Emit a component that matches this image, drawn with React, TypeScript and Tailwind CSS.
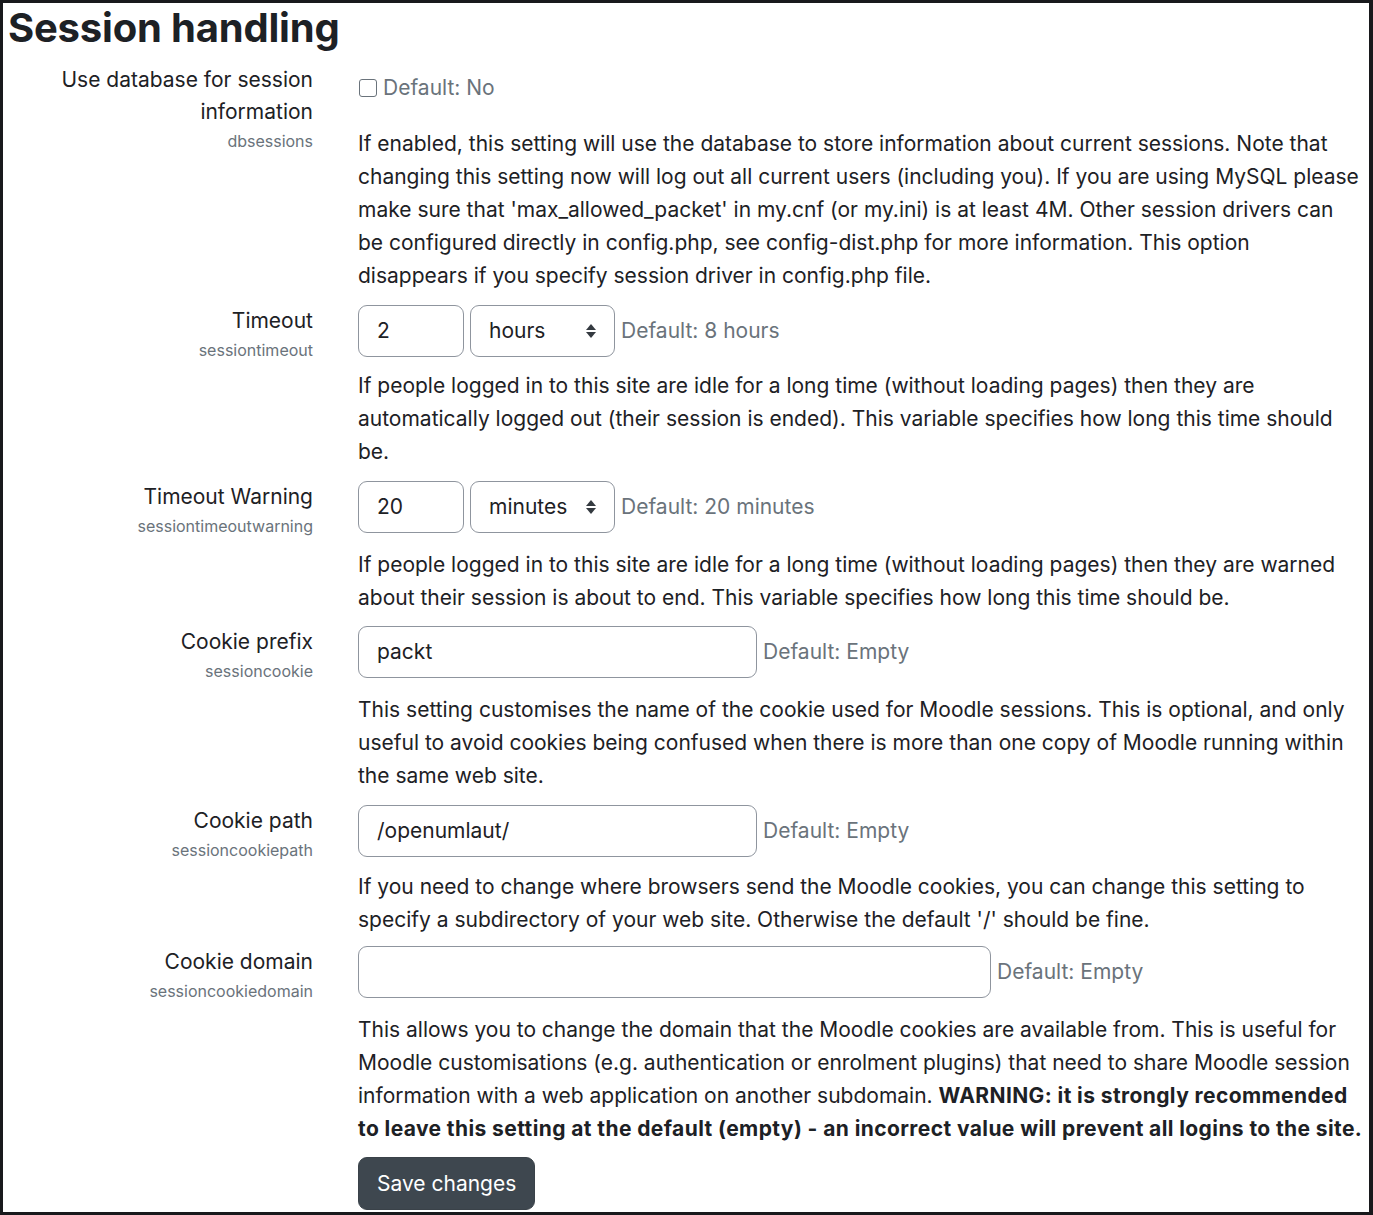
import React from "react";

const font = { fontFamily: "Inter, 'Noto Sans', sans-serif" };

function Label({ lines, sub }: { lines: string[]; sub: string }) {
  return (
    <div className="w-[310px] shrink-0 text-right">
      {lines.map((l, i) => (
        <div key={i} className="text-[21px] leading-[32px] text-[#1d2125]">
          {l}
        </div>
      ))}
      <div className="text-[16px] leading-[26px] text-[#6a737b]">{sub}</div>
    </div>
  );
}

function Desc({ children, className = "" }: { children: React.ReactNode; className?: string }) {
  return (
    <div className={"text-[21px] leading-[33px] text-[#1d2125] whitespace-nowrap " + className}>
      {children}
    </div>
  );
}

function TextInput({ value, w }: { value: string; w: string }) {
  return (
    <div
      className={
        "h-[52px] rounded-[9px] border border-[#8f959e] bg-white flex items-center px-[18px] text-[21px] text-[#1d2125] " +
        w
      }
    >
      {value}
    </div>
  );
}

function Select({ value }: { value: string }) {
  return (
    <div className="h-[52px] w-[145px] ml-[6px] rounded-[9px] border border-[#8f959e] bg-white flex items-center justify-between pl-[18px] pr-[17px] text-[21px] text-[#1d2125]">
      <span>{value}</span>
      <svg width="12" height="16" viewBox="0 0 12 16">
        <path d="M6 1 L11 7 L1 7 Z" fill="#343a40" />
        <path d="M6 15 L11 9 L1 9 Z" fill="#343a40" />
      </svg>
    </div>
  );
}

function DefaultInfo({ text }: { text: string }) {
  return <span className="ml-[6px] text-[21px] text-[#6a737b]">{text}</span>;
}

export default function App() {
  return (
    <div
      style={font}
      className="w-[1373px] h-[1215px] bg-white border-t-[3px] border-l-[3px] border-b-[3px] border-r-[4px] border-[#18191c] overflow-hidden"
    >
      <h2 className="text-[40px] font-bold leading-[48px] text-[#1d2125] pl-[5px] pt-[1px] tracking-[-0.2px]">
        Session handling
      </h2>

      {/* Row 1 */}
      <div className="flex mt-[12px]">
        <Label lines={["Use database for session", "information"]} sub="dbsessions" />
        <div className="ml-[45px] pt-[7px]">
          <div className="flex items-center h-[33px]">
            <div className="w-[18px] h-[18px] rounded-[3px] border border-[#6a737b] bg-white ml-[1px]" />
            <span className="ml-[6px] text-[21px] text-[#6a737b]">Default: No</span>
          </div>
          <Desc className="mt-[23px]">
            If enabled, this setting will use the database to store information about current sessions. Note that
            <br />
            changing this setting now will log out all current users (including you). If you are using MySQL please
            <br />
            make sure that 'max_allowed_packet' in my.cnf (or my.ini) is at least 4M. Other session drivers can
            <br />
            be configured directly in config.php, see config-dist.php for more information. This option
            <br />
            disappears if you specify session driver in config.php file.
          </Desc>
        </div>
      </div>

      {/* Timeout */}
      <div className="flex mt-[13px]">
        <Label lines={["Timeout"]} sub="sessiontimeout" />
        <div className="ml-[45px]">
          <div className="flex items-center">
            <TextInput value="2" w="w-[106px]" />
            <Select value="hours" />
            <DefaultInfo text="Default: 8 hours" />
          </div>
          <Desc className="mt-[12px]">
            If people logged in to this site are idle for a long time (without loading pages) then they are
            <br />
            automatically logged out (their session is ended). This variable specifies how long this time should
            <br />
            be.
          </Desc>
        </div>
      </div>

      {/* Timeout warning */}
      <div className="flex mt-[13px]">
        <Label lines={["Timeout Warning"]} sub="sessiontimeoutwarning" />
        <div className="ml-[45px]">
          <div className="flex items-center">
            <TextInput value="20" w="w-[106px]" />
            <Select value="minutes" />
            <DefaultInfo text="Default: 20 minutes" />
          </div>
          <Desc className="mt-[15px]">
            If people logged in to this site are idle for a long time (without loading pages) then they are warned
            <br />
            about their session is about to end. This variable specifies how long this time should be.
          </Desc>
        </div>
      </div>

      {/* Cookie prefix */}
      <div className="flex mt-[12px]">
        <Label lines={["Cookie prefix"]} sub="sessioncookie" />
        <div className="ml-[45px]">
          <div className="flex items-center">
            <TextInput value="packt" w="w-[399px]" />
            <DefaultInfo text="Default: Empty" />
          </div>
          <Desc className="mt-[15px]">
            This setting customises the name of the cookie used for Moodle sessions. This is optional, and only
            <br />
            useful to avoid cookies being confused when there is more than one copy of Moodle running within
            <br />
            the same web site.
          </Desc>
        </div>
      </div>

      {/* Cookie path */}
      <div className="flex mt-[13px]">
        <Label lines={["Cookie path"]} sub="sessioncookiepath" />
        <div className="ml-[45px]">
          <div className="flex items-center">
            <TextInput value="/openumlaut/" w="w-[399px]" />
            <DefaultInfo text="Default: Empty" />
          </div>
          <Desc className="mt-[13px]">
            If you need to change where browsers send the Moodle cookies, you can change this setting to
            <br />
            specify a subdirectory of your web site. Otherwise the default '/' should be fine.
          </Desc>
        </div>
      </div>

      {/* Cookie domain */}
      <div className="flex mt-[10px]">
        <Label lines={["Cookie domain"]} sub="sessioncookiedomain" />
        <div className="ml-[45px]">
          <div className="flex items-center">
            <TextInput value="" w="w-[633px]" />
            <DefaultInfo text="Default: Empty" />
          </div>
          <Desc className="mt-[15px]">
            This allows you to change the domain that the Moodle cookies are available from. This is useful for
            <br />
            Moodle customisations (e.g. authentication or enrolment plugins) that need to share Moodle session
            <br />
            information with a web application on another subdomain.{" "}
            <b className="font-bold tracking-[0.4px]">WARNING: it is strongly recommended</b>
            <br />
            <b className="font-bold tracking-[0.4px]">
              to leave this setting at the default (empty) - an incorrect value will prevent all logins to the site.
            </b>
          </Desc>
          <button className="mt-[12px] h-[53px] px-[18px] rounded-[9px] bg-[#3e474f] text-white text-[21px] border border-[#3a4249]">
            Save changes
          </button>
        </div>
      </div>
    </div>
  );
}
